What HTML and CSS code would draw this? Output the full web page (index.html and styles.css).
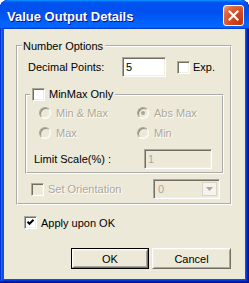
FILE: index.html
```html
<!DOCTYPE html>
<html>
<head>
<meta charset="utf-8">
<link rel="stylesheet" href="styles.css">
</head>
<body>
<div class="window">
  <div class="titlebar">
    <span class="title">Value Output Details</span>
    <span class="close"><svg width="11" height="11" viewBox="0 0 11 11"><path d="M1.5 1.5L9.5 9.5M9.5 1.5L1.5 9.5" stroke="#fff" stroke-width="2.2" stroke-linecap="square"/></svg></span>
  </div>
  <div class="body">
    <fieldset class="group outer">
      <legend class="legend-text">Number Options</legend>
      <div class="row decimal">
        <span class="lbl-dec">Decimal Points:</span>
        <span class="edit dec-edit">5</span>
        <span class="chk exp-chk"></span>
        <span>Exp.</span>
      </div>
      <fieldset class="group inner">
        <legend class="legend-chk"><span class="chk"></span><span>MinMax Only</span></legend>
        <div class="radios">
          <div class="radio-item"><span class="radio"></span><span class="dis">Min &amp; Max</span></div>
          <div class="radio-item"><span class="radio checked"></span><span class="dis">Abs Max</span></div>
          <div class="radio-item"><span class="radio"></span><span class="dis">Max</span></div>
          <div class="radio-item"><span class="radio"></span><span class="dis">Min</span></div>
        </div>
        <div class="row limit">
          <span class="lbl-limit">Limit Scale(%) :</span>
          <span class="edit limit-edit">1</span>
        </div>
      </fieldset>
      <div class="row orient">
        <span class="orient-lbl"><span class="chk chk-dis"></span><span class="dis">Set Orientation</span></span>
        <span class="combo"><span class="combo-val">0</span><span class="combo-btn"><svg width="7" height="4" viewBox="0 0 7 4"><path d="M0 0H7L3.5 4Z" fill="#aca899"/></svg></span></span>
      </div>
    </fieldset>
    <div class="row apply">
      <span class="chk"><svg width="9" height="9" viewBox="0 0 9 9"><path d="M1.5 3.8L3.5 5.8L7.5 1.8" fill="none" stroke="#000" stroke-width="2"/></svg></span>
      <span>Apply upon OK</span>
    </div>
    <div class="buttons">
      <span class="btn default"><span class="btn-in">OK</span></span>
      <span class="btn cancel"><span class="btn-in">Cancel</span></span>
    </div>
  </div>
</div>
</body>
</html>
```
FILE: styles.css
```css
* { box-sizing: border-box; }
html, body { margin: 0; padding: 0; }
body {
  width: 249px;
  height: 283px;
  overflow: hidden;
  background: #fff;
  font-family: "Liberation Sans", Arial, sans-serif;
  font-size: 11px;
  color: #000;
}
.window {
  width: 249px;
  height: 283px;
  display: flex;
  flex-direction: column;
  border-radius: 8px 8px 0 0;
  overflow: hidden;
  background: #0855dd;
  box-shadow: inset -1px -1px #00138c, inset 1px 1px #0831d9, inset -2px -2px #001ea0, inset 2px 2px #166aee, inset -3px -3px #003bda, inset 3px 3px #0855dd;
}
.titlebar {
  height: 29px;
  flex: none;
  display: flex;
  align-items: flex-start;
  padding: 0 5px 0 7px;
  border-radius: 8px 8px 0 0;
  background: linear-gradient(180deg, #0997ff, #0053ee 8%, #0050ee 40%, #06f 88%, #06f 93%, #005bff 95%, #003dd7 96%, #003dd7);
}
.title {
  flex: 1;
  margin-top: 7px;
  line-height: 20px;
  font-weight: bold;
  font-size: 13px;
  color: #fff;
  text-shadow: 1px 1px #0f1089;
  white-space: nowrap;
}
.close {
  margin-top: 5px;
  width: 21px;
  height: 21px;
  border: 1px solid #fff;
  border-radius: 3px;
  display: flex;
  align-items: center;
  justify-content: center;
  background: radial-gradient(circle at 85% 85%, #c2360f 0%, #d54a1f 45%, #e06a40 75%, #f2a888 100%);
}
.body {
  flex: 1;
  margin: 0 4px 4px;
  background: #ece9d8;
  padding: 11px 13px 0 12px;
  display: flex;
  flex-direction: column;
}
.group {
  margin: 0;
  padding: 0;
  border: 2px groove #fff;
  min-width: 0;
}
.outer > legend {
  margin-left: 4px;
  padding: 0 2px 0 1px;
  line-height: 12px;
}
.row {
  display: flex;
  align-items: center;
}
.decimal {
  height: 20px;
  margin-top: 5px;
  padding-left: 10px;
}
.lbl-dec { width: 94px; }
.edit {
  display: block;
  height: 20px;
  border: 1px solid;
  border-color: #aca899 #fff #fff #aca899;
  box-shadow: inset 1px 1px #716f64, inset -1px -1px #f1efe2;
  background: #fff;
  padding: 0 3px;
  line-height: 18px;
}
.dec-edit { width: 44px; }
.chk {
  display: flex;
  align-items: center;
  justify-content: center;
  width: 13px;
  height: 13px;
  flex: none;
  border: 1px solid;
  border-color: #aca899 #fff #fff #aca899;
  box-shadow: inset 1px 1px #716f64, inset -1px -1px #f1efe2;
  background: #fff;
}
.chk-dis { background: #ece9d8; }
.exp-chk { margin-left: 11px; margin-right: 3px; }
.inner { margin: 11px 6px 0 7px; padding-bottom: 3px; }
.inner > legend {
  margin-left: 3px;
  padding: 0 2px;
  display: flex;
  align-items: center;
  gap: 4px;
  height: 13px;
  line-height: 13px;
}
.radios {
  display: grid;
  grid-template-columns: 98px auto;
  row-gap: 4px;
  padding: 4px 0 0 12px;
}
.radio-item {
  display: flex;
  align-items: center;
  gap: 5px;
  height: 16px;
}
.radio {
  position: relative;
  width: 12px;
  height: 12px;
  flex: none;
  border-radius: 50%;
  border: 1px solid;
  border-color: #aca899 #fff #fff #aca899;
  box-shadow: inset 1px 1px #8d8a7e, inset -1px -1px #f1efe2;
  background: #ece9d8;
}
.radio.checked::after {
  content: "";
  position: absolute;
  left: 3px;
  top: 3px;
  width: 4px;
  height: 4px;
  border-radius: 50%;
  background: #aca899;
}
.dis {
  color: #aca899;
  text-shadow: 1px 1px #fff;
}
.limit {
  height: 20px;
  margin-top: 8px;
  padding-left: 7px;
}
.lbl-limit { width: 110px; }
.limit-edit {
  width: 68px;
  background: #ece9d8;
  color: #aca899;
}
.orient {
  height: 20px;
  margin-top: 5px;
  margin-bottom: 4px;
  padding-left: 13px;
}
.orient-lbl {
  width: 122px;
  display: flex;
  align-items: center;
  gap: 4px;
}
.combo {
  width: 67px;
  height: 20px;
  display: flex;
  align-items: stretch;
  border: 1px solid;
  border-color: #aca899 #fff #fff #aca899;
  box-shadow: inset 1px 1px #716f64, inset -1px -1px #f1efe2;
  background: #ece9d8;
  padding: 2px;
}
.combo-val {
  flex: 1;
  color: #aca899;
  line-height: 14px;
  padding-left: 2px;
}
.combo-btn {
  width: 15px;
  display: flex;
  align-items: center;
  justify-content: center;
  background: #f4f3ee;
  border: 1px solid #d8d5c8;
}
.apply {
  margin-top: 11px;
  padding-left: 8px;
  gap: 4px;
  height: 13px;
}
.buttons {
  display: flex;
  gap: 3px;
  margin-top: 19px;
  padding-left: 55px;
}
.btn {
  display: flex;
  height: 21px;
  border: 1px solid;
  border-color: #fff #716f64 #716f64 #fff;
  box-shadow: inset 1px 1px #f1efe2, inset -1px -1px #aca899;
  background: #ece9d8;
}
.btn-in {
  flex: 1;
  display: flex;
  align-items: center;
  justify-content: center;
}
.default {
  width: 78px;
  border: 1px solid #000;
  box-shadow: none;
}
.default .btn-in {
  border: 1px solid;
  border-color: #fff #716f64 #716f64 #fff;
  box-shadow: inset 1px 1px #f1efe2, inset -1px -1px #aca899;
}
.cancel { width: 79px; }
```
